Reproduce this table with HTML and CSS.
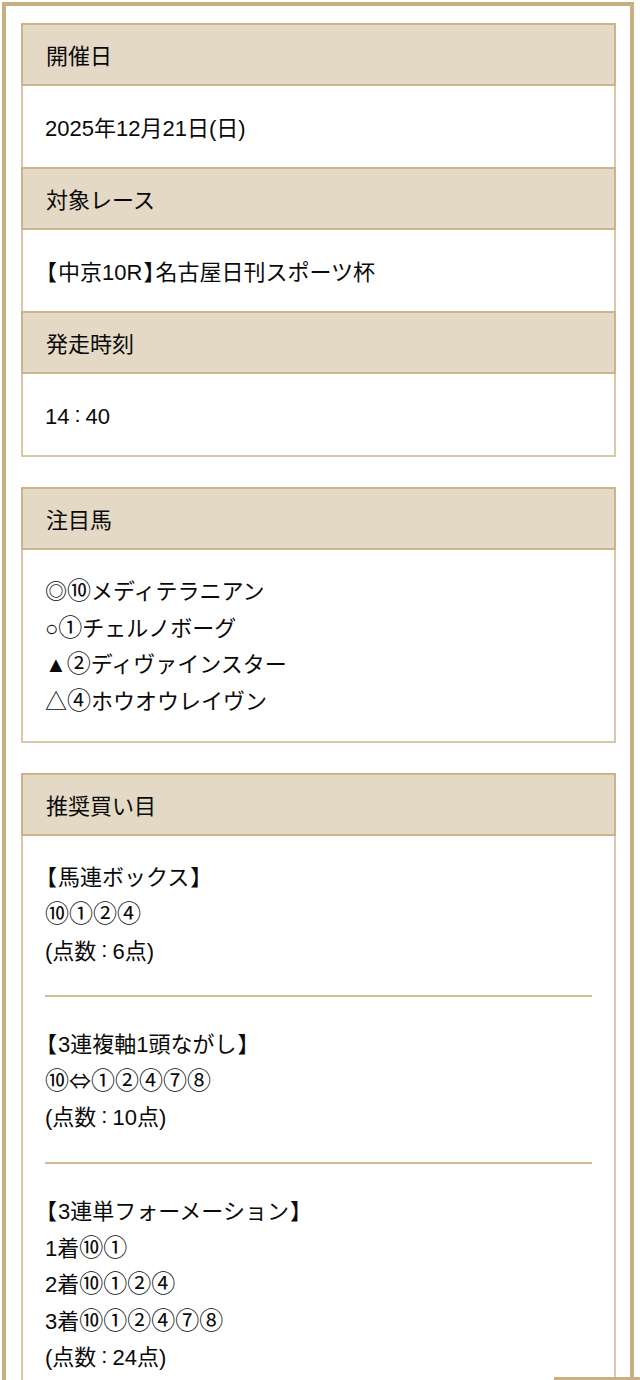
FILE: index.html
```html
<!DOCTYPE html>
<html lang="ja">
<head>
<meta charset="utf-8">
<title>予想</title>
<link rel="stylesheet" href="styles.css">
</head>
<body>
<div class="frame">
  <section class="box">
    <h2 class="head">開催日</h2>
    <div class="body">2025年12月21日(日)</div>
    <h2 class="head">対象レース</h2>
    <div class="body"><span class="br">【</span>中京10R<span class="br">】</span>名古屋日刊スポーツ杯</div>
    <h2 class="head">発走時刻</h2>
    <div class="body">14<span class="colon">:</span>40</div>
  </section>

  <section class="box">
    <h2 class="head">注目馬</h2>
    <div class="body list">
      <p>◎<span class="num">⑩</span>メディテラニアン</p>
      <p>○<span class="num">①</span>チェルノボーグ</p>
      <p>▲<span class="num">②</span>ディヴァインスター</p>
      <p>△<span class="num">④</span>ホウオウレイヴン</p>
    </div>
  </section>

  <section class="box">
    <h2 class="head">推奨買い目</h2>
    <div class="body list">
      <div class="bet">
        <p><span class="br">【</span>馬連ボックス<span class="br">】</span></p>
        <p><span class="num">⑩①②④</span></p>
        <p>(点数<span class="colon">:</span>6点)</p>
      </div>
      <div class="bet">
        <p><span class="br">【</span>3連複軸1頭ながし<span class="br">】</span></p>
        <p><span class="num">⑩</span><span class="arrow">⇔</span><span class="num">①②④⑦⑧</span></p>
        <p>(点数<span class="colon">:</span>10点)</p>
      </div>
      <div class="bet">
        <p><span class="br">【</span>3連単フォーメーション<span class="br">】</span></p>
        <p>1着<span class="num">⑩①</span></p>
        <p>2着<span class="num">⑩①②④</span></p>
        <p>3着<span class="num">⑩①②④⑦⑧</span></p>
        <p>(点数<span class="colon">:</span>24点)</p>
      </div>
    </div>
  </section>
</div>
<div class="pagetop"></div>
</body>
</html>
```

FILE: styles.css
```css
html, body {
  margin: 0;
  padding: 0;
  background: #fff;
}
body {
  font-family: "Liberation Sans", "Noto Sans CJK JP", sans-serif;
  font-size: 22px;
  line-height: 37px;
  color: #0a0a0a;
}
.frame {
  margin: 2px 0 0 2px;
  width: 632px;
  box-sizing: border-box;
  border: 4px solid #c9b084;
  border-bottom: none;
  padding: 17px 14px 40px 15px;
}
.box {
  border: 2px solid #d8c8a6;
  border-top: none;
  margin-bottom: 30px;
}
.head {
  margin: 0 -2px;
  font-size: 22px;
  font-weight: normal;
  line-height: 37px;
  padding: 13px 23px 9px;
  background: #e3d9c4;
  border: 2px solid #cbb38b;
}
.body {
  padding: 24px 22px 20px;
}
.list {
  line-height: 36.6px;
  padding-bottom: 21px;
}
.body p {
  margin: 0;
}
.br {
  font-family: "Noto Sans CJK JP", sans-serif;
  font-feature-settings: "halt";
  line-height: 16px;
  padding: 0 1px;
}
.num {
  font-family: "Noto Sans CJK JP", sans-serif;
  font-size: 24px;
  line-height: 16px;
}
.arrow {
  font-family: "Noto Sans CJK JP", "DejaVu Sans", sans-serif;
  font-size: 22px;
  line-height: 16px;
}
.colon {
  display: inline-block;
  padding: 0 5px;
  position: relative;
  top: -2px;
  line-height: 16px;
}
.bet {
  padding-bottom: 25px;
  border-bottom: 2px solid #d2bc94;
  margin-bottom: 30px;
}
.bet:last-child {
  border-bottom: none;
  margin-bottom: 0;
  padding-bottom: 60px;
}
.pagetop {
  position: fixed;
  left: 554px;
  right: 0;
  bottom: 0;
  height: 3px;
  background: #c9b084;
}
```
